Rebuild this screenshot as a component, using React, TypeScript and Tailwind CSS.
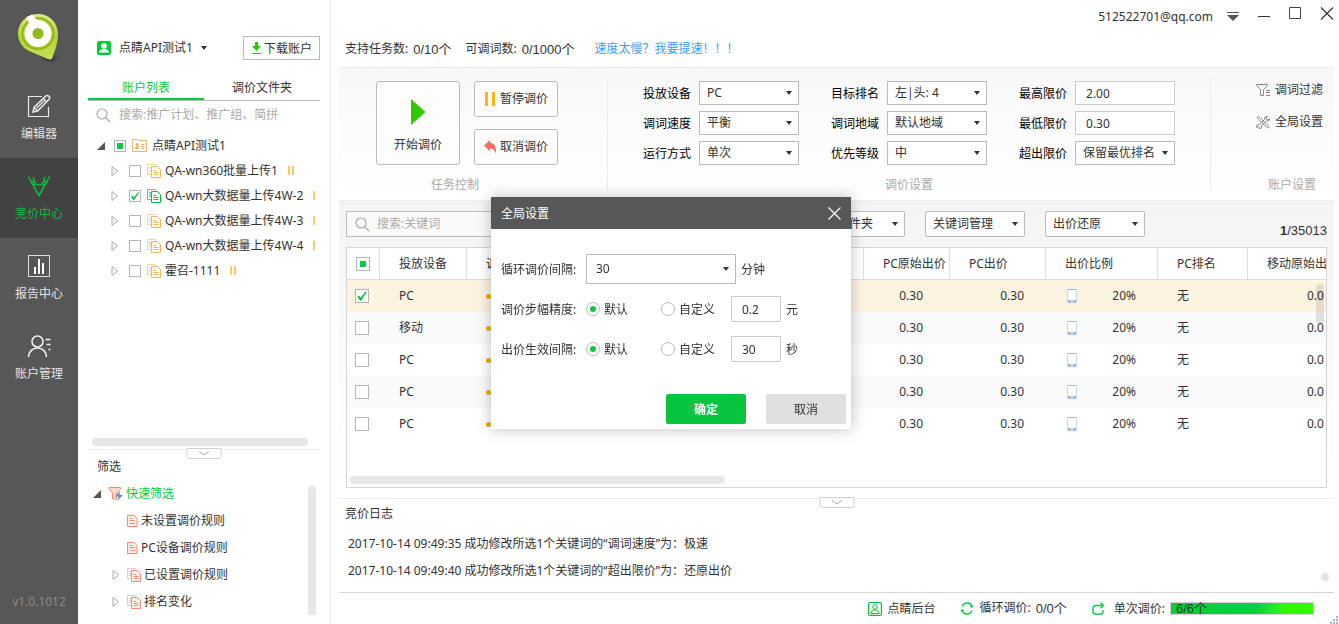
import { useState } from 'react';
import type { ReactNode } from 'react';
import clsx from 'clsx';

/* ---------- icons ---------- */

function Logo() {
  return (
    <svg width="44" height="52" viewBox="0 0 44 52">
      <defs>
        <linearGradient id="pin" x1="0" y1="0" x2="0" y2="1">
          <stop offset="0" stopColor="#dbea8c" />
          <stop offset="0.5" stopColor="#b3d334" />
          <stop offset="1" stopColor="#c9e05c" />
        </linearGradient>
        <radialGradient id="shade">
          <stop offset="0" stopColor="#2e2e2e" />
          <stop offset="1" stopColor="#2e2e2e" stopOpacity="0" />
        </radialGradient>
      </defs>
      <ellipse cx="33" cy="46" rx="9" ry="5" fill="url(#shade)" />
      <path d="M21 2C32 2 41 10.500 41 22c0 10-4 19-5.500 23.500-.6 2-2.500 2.500-4.500 1.500L11 38.500C5 35 1 29 1 22 1 10.500 10 2 21 2Z" fill="url(#pin)" />
      <circle cx="21" cy="21.500" r="16.500" fill="#8eb51a" />
      <circle cx="21" cy="21.500" r="15" fill="#a9cc2b" />
      <circle cx="21" cy="21.500" r="13.500" fill="#fff" />
      <path d="M9 5.500 15 2.500 21 9 13 13Z" fill="#fff" />
      <circle cx="21" cy="21.500" r="5.500" fill="#94b81f" />
    </svg>
  );
}

function EditIcon() {
  return (
    <svg width="24" height="24" viewBox="0 0 24 24" fill="none" stroke="#e8e8e8" strokeWidth="1.2">
      <path d="M15 2.500H1.500v20h20V13" />
      <path d="M6 18l1-4.500L18.500 2.200c1-1 2.500-.9 3.400 0 .9.900 1 2.300 0 3.300L10.500 17Z" strokeWidth="1.600" />
      <path d="M7 13.500l3.500 3.500M16.500 4.500l3.200 3.200M18 6 9.500 14.300" />
    </svg>
  );
}

function BidIcon() {
  return (
    <svg width="24" height="24" viewBox="0 0 24 24" fill="none" stroke="#10b83e" strokeWidth="1.600">
      <path d="M1.500 2.500 4 7.500h3.500L6 3M22.500 2.500 20 7.500h-3.500L18 3" strokeWidth="1.400" />
      <path d="M3.800 7 12 21.500 20.200 7M7.500 7.500 9 10.500h6l1.500-3M6 10.500h12" />
    </svg>
  );
}

function ReportIcon() {
  return (
    <svg width="24" height="24" viewBox="0 0 24 24" fill="none">
      <rect x="1.500" y="1.500" width="21" height="21" stroke="#ddd" />
      <path d="M8 20v-7M12 20V5M16 20V9" stroke="#fff" strokeWidth="2" />
    </svg>
  );
}

function AccountIcon() {
  return (
    <svg width="24" height="24" viewBox="0 0 24 24" fill="none" stroke="#f0f0f0" strokeWidth="1.600">
      <circle cx="10.500" cy="7.500" r="5.500" />
      <path d="M1.500 23c.3-5.500 4-9 9-9s8.700 3.500 9 9M18.500 5.500h5M19.500 10.500h4M21.500 15.500h2" />
    </svg>
  );
}

function SearchIcon() {
  return (
    <svg width="15" height="15" viewBox="0 0 15 15" fill="none" stroke="#aaa" strokeWidth="1.200" className="shrink-0">
      <circle cx="6" cy="6" r="5" />
      <path d="M9.600 9.600 14 14" />
    </svg>
  );
}

function Caret({ className }: { className?: string }) {
  return (
    <svg width="6" height="4" viewBox="0 0 6 4" fill="#333" className={className}>
      <path d="M0 0h6L3 4Z" />
    </svg>
  );
}

function Twisty({ open }: { open?: boolean }) {
  return (
    <svg width="8" height="10" viewBox="0 0 8 10" className="shrink-0">
      {open ? <path d="M8 1v8H0Z" fill="#555" /> : <path d="M1 .5v9L6.500 5Z" fill="#fff" stroke="#aaa" />}
    </svg>
  );
}

function PlanIcon({ color, back, fill }: { color: string; back: string; fill: string }) {
  return (
    <svg width="14" height="14" viewBox="0 0 14 14" fill="none" className="shrink-0">
      <path d="M8.500 2V.5h-8v10H4M2 3.500h2M2 5.500h2M2 7.500h2" stroke={back} />
      <path d="M4.500 2.500h6l3 3v8h-9Z" fill={fill} stroke={color} />
      <path d="M6.500 6.500H9M6.500 8.500h5M6.500 10.500h5" stroke={color} />
    </svg>
  );
}

function RuleIcon() {
  return (
    <svg width="11" height="12" viewBox="0 0 11 12" fill="none" stroke="#ee8f77" className="shrink-0">
      <path d="M.5.5h7l2.500 3v8H.5Z" fill="#fdeee9" />
      <path d="M2.500 3.500h3M2.500 5.500h5M2.500 8.500h5.500" />
    </svg>
  );
}

function FolderIcon() {
  return (
    <svg width="15" height="13" viewBox="0 0 15 13" fill="none" stroke="#f0b763" className="shrink-0">
      <path d="M.5 12.500V.5h5l1 1h8v11Z" />
      <path d="M9 5.500h3.500M9 7.500h3.500M9 9.500h3.500" />
      <path d="M3 10v-1.500l1.500-1L4.500 4h1.500v3.500l1.500 1V10Z" fill="#f0b763" stroke="none" />
      <circle cx="5.200" cy="5.500" r="1.500" fill="#f0b763" stroke="none" />
    </svg>
  );
}

function QuickFilterIcon() {
  return (
    <svg width="15" height="14" viewBox="0 0 15 14" fill="none" className="shrink-0">
      <path d="M1 .5h11.500v1.500L8.500 6v6h-4V6L1 2Z" fill="#fbd9cf" stroke="#ee8f77" />
      <path d="M12 4 7 9.500h3.500L9 14l6-6h-3.500Z" fill="#5b8ee0" />
    </svg>
  );
}

function PhoneIcon() {
  return (
    <svg width="10" height="14" viewBox="0 0 10 14">
      <rect x="0.500" y="0.500" width="9" height="13" rx="1" fill="#fff" stroke="#c6d5e6" />
      <path d="M.5.5h9M.5 12.500h9" stroke="#a5bcd6" />
      <path d="M1 12.500h8" stroke="#a5bcd6" strokeWidth="3" />
      <path d="M4 12.500h2" stroke="#fff" />
    </svg>
  );
}

function Person({ solid }: { solid?: boolean }) {
  return (
    <svg width="14" height="14" viewBox="0 0 14 14" fill="none" className="shrink-0">
      {solid ? (
        <>
          <rect width="14" height="14" rx="2" fill="#08ca3e" />
          <circle cx="7" cy="5" r="2.800" fill="#fff" />
          <path d="M2 11.500c0-2 2-3 4-3.500h2c2 .5 4 1.500 4 3.500Z" fill="#fff" />
        </>
      ) : (
        <g stroke="#08c040">
          <rect x=".6" y=".6" width="12.800" height="12.800" rx="1.500" strokeWidth="1.200" />
          <circle cx="7" cy="5" r="2.300" />
          <path d="M2.800 11.500c0-2 1.800-3.500 4.200-3.500s4.200 1.500 4.200 3.500Z" />
        </g>
      )}
    </svg>
  );
}

/* ---------- form parts ---------- */

const digits = "font-['Liberation_Sans','Noto_Sans_CJK_SC',sans-serif] text-[13px]";

function Select({ id, label, options, className }: { id: string; label?: string; options: string[]; className?: string }) {
  return (
    <span className="relative inline-flex">
      <select
        id={id}
        aria-label={label}
        className={clsx('appearance-none border border-[#bbb] bg-white pr-4 text-[#333] outline-none', className)}
      >
        {options.map(o => <option key={o}>{o}</option>)}
      </select>
      <Caret className="pointer-events-none absolute top-1/2 right-[7px] -mt-[2px]" />
    </span>
  );
}

function Checkbox({ label, checked, mixed, small }: { label: string; checked?: boolean; mixed?: boolean; small?: boolean }) {
  const [on, setOn] = useState(!!checked);
  return (
    <span className={clsx('relative inline-flex shrink-0', small ? 'size-3' : 'size-[14px]')}>
      <input
        type="checkbox"
        aria-label={label}
        checked={on}
        onChange={() => setOn(!on)}
        className={clsx(
          'grid size-full appearance-none place-content-center border border-[#b5b5b5] bg-white',
          mixed && 'before:size-[6px] before:bg-[#08ca3e]',
        )}
      />
      {on && (
        <svg viewBox="0 0 12 12" className="pointer-events-none absolute inset-0 size-full">
          <path d="M2 6.500 3.500 5.800 4.800 7.500 9.200 2l.8.500L5.200 10H4.300Z" fill="#08c03c" />
        </svg>
      )}
    </span>
  );
}

function Radio({ name, text, checked }: { name: string; text: string; checked?: boolean }) {
  return (
    <label className="flex w-[75px] items-center gap-1">
      <input
        type="radio"
        name={name}
        defaultChecked={checked}
        className="grid size-[14px] appearance-none place-content-center rounded-full border border-[#bbb] bg-white checked:before:size-[6px] checked:before:rounded-full checked:before:bg-[#08ca3e]"
      />
      <span className="pt-0.5">{text}</span>
    </label>
  );
}

function CollapseTab({ label }: { label: string }) {
  return (
    <button aria-label={label} className="absolute -top-0.5 left-1/2 flex h-[11px] w-[35px] -translate-x-1/2 items-center justify-center rounded-b-xs border border-[#d0d0d0] bg-white">
      <svg width="11" height="5" viewBox="0 0 11 5" fill="none" stroke="#aaa">
        <path d="M.5.5l5 3.500 5-3.500" />
      </svg>
    </button>
  );
}

/* ---------- navigation ---------- */

const navItems = [
  { text: '编辑器', icon: <EditIcon /> },
  { text: '竞价中心', icon: <BidIcon />, active: true },
  { text: '报告中心', icon: <ReportIcon /> },
  { text: '账户管理', icon: <AccountIcon /> },
];

function SideNav() {
  return (
    <nav className="flex w-[78px] shrink-0 flex-col items-center bg-[#575757]">
      <div className="flex h-[78px] items-start pt-3">
        <Logo />
      </div>
      {navItems.map(item => (
        <a
          key={item.text}
          href="#"
          className={clsx(
            'flex h-20 w-full flex-col items-center gap-1.5 pt-4',
            item.active ? 'bg-[#424242] text-[#10b83e]' : 'text-[#e4e4e4]',
          )}
        >
          {item.icon}
          <span className="leading-5">{item.text}</span>
        </a>
      ))}
      <span className="mt-auto pb-3.5 text-[#8a8a8a]">v1.0.1012</span>
    </nav>
  );
}

/* ---------- account panel ---------- */

const plans = [
  { name: 'QA-wn360批量上传1' },
  { name: 'QA-wn大数据量上传4W-2', checked: true },
  { name: 'QA-wn大数据量上传4W-3' },
  { name: 'QA-wn大数据量上传4W-4' },
  { name: '霍召-1111' },
];

const rules = [
  { name: '未设置调价规则' },
  { name: 'PC设备调价规则' },
  { name: '已设置调价规则', group: true },
  { name: '排名变化', group: true },
];

function AccountPanel() {
  return (
    <aside className="flex w-[253px] shrink-0 flex-col border-r border-[#ececec] px-2.5">
      <div className="mt-9 flex items-center justify-between pl-[9px]">
        <button className="flex items-center gap-2">
          <Person solid />
          点睛API测试1
          <Caret />
        </button>
        <button className="flex h-6 w-[77px] items-center justify-center gap-0.5 border border-[#bbb]">
          <svg width="11" height="12" viewBox="0 0 11 12" fill="#2fc800">
            <path d="M4 0h3v4h3L5.500 9 1 4h3ZM1 11h9v1H1Z" />
          </svg>
          <span className="pt-0.5">下载账户</span>
        </button>
      </div>
      <div className="mt-[17px] flex h-6 border-b border-[#bbb]">
        <button className="flex-1 border-b-2 border-[#08ca3e] leading-5 text-[#08ca3e]">账户列表</button>
        <button className="flex-1 pb-0.5 leading-5">调价文件夹</button>
      </div>
      <label className="mb-1 flex h-7 items-center gap-2 px-2">
        <SearchIcon />
        <input
          aria-label="搜索账户"
          placeholder="搜索:推广计划、推广组、简拼"
          className="min-w-0 flex-1 outline-none placeholder:text-[#aaa]"
        />
      </label>
      <ul className="mr-1 flex-1 overflow-hidden whitespace-nowrap">
        <li className="flex h-[25px] items-center pl-[9px]">
          <Twisty open />
          <span className="mr-1.5 ml-[9px] flex"><Checkbox small mixed label="点睛API测试1" /></span>
          <FolderIcon />
          <span className="ml-[5px]">点睛API测试1</span>
        </li>
        {plans.map(p => (
          <li key={p.name} className="flex h-[25px] items-center pl-[23px]">
            <Twisty />
            <span className="mr-1.5 ml-[10px] flex"><Checkbox small checked={p.checked} label={p.name} /></span>
            {p.checked
              ? <PlanIcon color="#08c040" back="#4fd67a" fill="#fff" />
              : <PlanIcon color="#f0b763" back="#f7d19a" fill="#fff8ec" />}
            <span className="ml-1">{p.name}</span>
            <svg width="7" height="9" viewBox="0 0 7 9" fill="#ffc766" className="ml-[10px] shrink-0">
              <path d="M0 0h2v9H0ZM4 0h2v9H4Z" />
            </svg>
          </li>
        ))}
      </ul>
      <div className="mb-[3px] ml-1 h-2 w-[216px] rounded-full bg-[#e7e7e7]" />
      <div className="relative border-t border-[#ececec] pt-2">
        <CollapseTab label="收起筛选" />
        <h2 className="pl-[9px] leading-[18px]">筛选</h2>
        <div className="mb-[9px] flex justify-between pt-1 pr-1">
          <ul>
            <li className="flex h-[27px] items-center pl-[5px] text-[#08ca3e]">
              <Twisty open />
              <span className="mr-[3px] ml-[7px]"><QuickFilterIcon /></span>
              快速筛选
            </li>
            {rules.map(r => (
              <li key={r.name} className={clsx('flex h-[27px] items-center', r.group ? 'pl-6' : 'pl-[39px]')}>
                {r.group && <span className="mr-[7px]"><Twisty /></span>}
                {r.group ? <PlanIcon color="#ee8f77" back="#f8c5b7" fill="#fdeee9" /> : <RuleIcon />}
                <span className="ml-[3px]">{r.name}</span>
              </li>
            ))}
          </ul>
          <div className="mt-[6px] w-2 rounded-t-full bg-[#e7e7e7]" />
        </div>
      </div>
    </aside>
  );
}

/* ---------- main area ---------- */

function TitleBar() {
  return (
    <header className="flex h-[34px] items-center justify-end">
      <span>512522701@qq.com</span>
      <button aria-label="菜单" className="ml-3.5">
        <svg width="12" height="10" viewBox="0 0 12 10" fill="#555"><path d="M0 0h12v1H0ZM0 3h12L6 9Z" /></svg>
      </button>
      <div className="-mt-2 ml-[19px] flex items-center gap-[19px]">
        <button aria-label="最小化">
          <svg width="12" height="14" viewBox="0 0 12 14" stroke="#333"><path d="M0 10.500h12" /></svg>
        </button>
        <button aria-label="最大化">
          <svg width="12" height="12" viewBox="0 0 12 12" fill="none" stroke="#444"><path d="M.5.5h11v11H.5Z" /></svg>
        </button>
        <button aria-label="关闭">
          <svg width="14" height="13" viewBox="0 0 14 13" stroke="#333" strokeWidth="1.200"><path d="M1 .5l12 12M13 .5l-12 12" /></svg>
        </button>
      </div>
    </header>
  );
}

const settings = [
  { id: 'device', label: '投放设备', options: ['PC', '移动'] },
  { id: 'rank', label: '目标排名', options: ['左|头: 4'] },
  { id: 'max', label: '最高限价', value: '2.00' },
  { id: 'speed', label: '调词速度', options: ['平衡', '极速'] },
  { id: 'area', label: '调词地域', options: ['默认地域'] },
  { id: 'min', label: '最低限价', value: '0.30' },
  { id: 'mode', label: '运行方式', options: ['单次', '循环'] },
  { id: 'priority', label: '优先等级', options: ['中', '高', '低'] },
  { id: 'over', label: '超出限价', options: ['保留最优排名', '还原出价'] },
];

function Caption({ children, className }: { children: ReactNode; className?: string }) {
  return <span className={clsx('mt-auto -mb-1 leading-5 text-[#aaa]', className)}>{children}</span>;
}

function Toolbar() {
  const btn = 'flex items-center justify-center rounded-[3px] border border-[#bbb] bg-[#fdfdfd]';
  return (
    <section className="flex h-[133px] border-t border-[#ececec] bg-linear-to-b from-[#f8f8f8] to-white pt-2 pb-[9px]">
      <div className="flex w-[268px] shrink-0 flex-col pt-[5px] pl-[37px]">
        <div className="flex gap-3.5">
          <button className={clsx(btn, 'h-[84px] w-[84px] flex-col gap-3 pt-1.5')}>
            <svg width="15" height="26" viewBox="0 0 15 26" fill="#2fc800"><path d="M0 0v26l14.500-13Z" /></svg>
            开始调价
          </button>
          <div className="flex flex-col gap-3">
            <button className={clsx(btn, 'h-9 w-[84px] gap-1')}>
              <svg width="12" height="14" viewBox="0 0 12 14" fill="#ffb31a"><path d="M1 0h3v14H1ZM8 0h3v14H8Z" /></svg>
              暂停调价
            </button>
            <button className={clsx(btn, 'h-9 w-[84px] gap-1')}>
              <svg width="12" height="14" viewBox="0 0 12 14" fill="#f8705c"><path d="M0 5.500 6 0v3c4.500 0 6.500 4 6 10.500C10.500 10 9 8.500 6 8.500v3Z" /></svg>
              取消调价
            </button>
          </div>
        </div>
        <Caption className="pl-[55px]">任务控制</Caption>
      </div>
      <div className="flex flex-1 flex-col items-center border-x border-[#ececec] pt-[5px]">
        <div className="grid grid-cols-3 gap-x-8 gap-y-1.5">
          {settings.map(s => (
            <div key={s.id} className="flex items-center gap-2">
              <label htmlFor={s.id} className="pt-0.5 text-black">{s.label}</label>
              {s.options ? (
                <Select id={s.id} options={s.options} className="h-6 w-[100px] pl-[7px]" />
              ) : (
                <input id={s.id} defaultValue={s.value} className="h-6 w-[100px] border border-[#ccc] bg-white px-2.5 outline-none" />
              )}
            </div>
          ))}
        </div>
        <Caption>调价设置</Caption>
      </div>
      <div className="flex w-[123px] shrink-0 flex-col pt-1 pl-[45px]">
        <button className="flex items-center gap-[5px] leading-5">
          <svg width="14" height="12" viewBox="0 0 14 12" fill="none" stroke="#888">
            <path d="M.5.5h11v1L7.500 5.500v6h-3v-6L.5 1.500ZM10 6.500h4M10 8.500h4M10 11.500h4" />
          </svg>
          调词过滤
        </button>
        <button className="mt-3 flex items-center gap-[5px] leading-5">
          <svg width="14" height="13" viewBox="0 0 14 13" fill="none" stroke="#888">
            <path d="M1 1.500 2.500.5 8 5.500l4.500 4.500c1 1-.5 2.500-1.500 1.500L6.500 7 1.500 2.500Z" />
            <path d="M13.500 2.500 12 4l-1.500-.5L10 2l1.500-1.500C9.500 0 8 1.500 8.500 3.500L3.500 8.500C1.500 8 0 9.500.5 11.500L2 10.500l1.500 1L3 13c2 0 3-1.500 2.500-3.500L10.500 5c2 .5 3.500-1 3-2.500Z" />
          </svg>
          全局设置
        </button>
        <Caption className="pl-3">账户设置</Caption>
      </div>
    </section>
  );
}

const keywords = [
  { device: 'PC', checked: true },
  { device: '移动' },
  { device: 'PC' },
  { device: 'PC' },
  { device: 'PC' },
];

function KeywordTable() {
  const th = 'border-r border-[#ddd] pl-[19px] text-left font-normal';
  return (
    <div className="relative flex-1 overflow-hidden border border-[#d6d6d6] bg-white">
      <table className="w-full min-w-[1010px] table-fixed border-separate border-spacing-0 whitespace-nowrap">
        <colgroup>
          <col className="w-[33px]" />
          <col className="w-[87px]" />
          <col className="w-[397px]" />
          <col className="w-[86px]" />
          <col className="w-[96px]" />
          <col className="w-[112px]" />
          <col className="w-[90px]" />
          <col />
        </colgroup>
        <thead>
          <tr className="h-8 [&>th]:border-b">
            <th className="border-r border-[#ddd] pl-[9px] text-left">
              <span className="flex"><Checkbox mixed label="全选" /></span>
            </th>
            <th className={th}>投放设备</th>
            <th className={th}>调价状态</th>
            <th className={th}>PC原始出价</th>
            <th className={th}>PC出价</th>
            <th className={th}>出价比例</th>
            <th className={th}>PC排名</th>
            <th className={th}>移动原始出价</th>
          </tr>
        </thead>
        <tbody>
          {keywords.map((k, i) => (
            <tr key={i} className={clsx('h-8', k.checked ? 'bg-[#fdf3e1]' : i % 2 ? 'bg-[#fafafa]' : 'bg-white')}>
              <td className="pl-2">
                <span className="flex"><Checkbox checked={k.checked} label={`选择第${i + 1}行`} /></span>
              </td>
              <td className="pl-[19px]">{k.device}</td>
              <td className="pl-[19px]"><span className="block size-[5px] rounded-full bg-[#f5a80c]" /></td>
              <td className="pr-[27px] text-right">0.30</td>
              <td className="pr-[22px] text-right">0.30</td>
              <td className="pr-[22px] pl-[21px]">
                <span className="flex items-center justify-between"><PhoneIcon />20%</span>
              </td>
              <td className="pl-[19px]">无</td>
              <td className="pl-[59px]">0.0</td>
            </tr>
          ))}
        </tbody>
      </table>
      <div className="absolute top-9 right-0.5 h-10 w-2 rounded-full bg-black/10" />
      <div className="absolute bottom-[3px] left-[3px] h-2 w-[375px] rounded-full bg-[#e7e7e7]" />
    </div>
  );
}

function KeywordSection() {
  const sel = 'h-[26px] w-[100px] rounded-xs pl-[7px] bg-[#fdfdfd]';
  return (
    <section className="flex flex-1 flex-col border-t border-[#ececec] bg-linear-to-b from-[#f4f4f4] to-white px-[7px] py-2.5">
      <div className="mb-2.5 flex gap-5">
        <label className="flex h-[26px] w-[439px] items-center gap-[7px] border border-[#bbb] bg-[#fafafa] px-2">
          <SearchIcon />
          <input aria-label="搜索关键词" placeholder="搜索:关键词" className="min-w-0 flex-1 outline-none placeholder:text-[#aaa]" />
        </label>
        <Select id="folder" label="调价文件夹" options={['调价文件夹']} className={sel} />
        <Select id="manage" label="关键词管理" options={['关键词管理']} className={sel} />
        <Select id="restore" label="出价还原" options={['出价还原']} className={sel} />
        <span className={clsx(digits, 'ml-auto self-end pb-px leading-[10px]')}><b>1</b>/35013</span>
      </div>
      <KeywordTable />
    </section>
  );
}

function BidLog() {
  return (
    <section className="relative h-[94px] shrink-0 border-t border-[#ececec] pt-[5px] pl-1.5">
      <CollapseTab label="收起日志" />
      <h2 className="leading-5">竞价日志</h2>
      <ul className="mt-1.5 pl-[3px] leading-[27px]">
        <li>2017-10-14 09:49:35 成功修改所选1个关键词的“调词速度”为：极速</li>
        <li>2017-10-14 09:49:40 成功修改所选1个关键词的“超出限价”为：还原出价</li>
      </ul>
      <div className="absolute right-[5px] bottom-[11px] size-2 rounded-full bg-[#e4e4e4]" />
    </section>
  );
}

function StatusBar() {
  return (
    <footer className="relative flex h-8 shrink-0 items-center justify-end border-t border-[#d5d5d5] pr-5">
      <a href="#" className="flex items-center gap-[5px]">
        <Person />
        点睛后台
      </a>
      <span className="ml-[25px] flex items-center gap-[5px]">
        <svg width="14" height="13" viewBox="0 0 14 13" fill="none" stroke="#12c94a" strokeWidth="1.400">
          <path d="M2 4.500C3 2 5 1 7 1c2.200 0 4 1 4.800 3M12 8.500C11 11 9 12 7 12c-2.200 0-4-1-4.800-3" />
          <path d="M14 3.500l-2 2.500-2.500-2M0 9.500 2 7l2.500 2" fill="#12c94a" stroke="none" />
        </svg>
        循环调价: <span className={digits}>0/0个</span>
      </span>
      <span className="ml-[25px] flex items-center">
        <svg width="13" height="13" viewBox="0 0 13 13" fill="none" stroke="#12c94a" strokeWidth="1.400">
          <path d="M10 3.500H4C2 3.500 1 4.500 1 6.500v3C1 11.500 2 12.200 4 12.200h4c2 0 3-.7 3-2.700V8M8.500.8l3 2.700-3 2.700" />
        </svg>
        <span className="ml-[9px]">单次调价:</span>
        <span className={clsx(digits, 'ml-[5px] flex h-[13px] w-36 items-center border border-[#dcd0dc] bg-linear-to-r from-[#04cf3e] from-60% to-[#2dfc00] to-80% pl-[5px]')}>
          6/6个
        </span>
      </span>
      <svg width="8" height="8" viewBox="0 0 8 8" fill="#aab2c8" className="absolute -right-1 bottom-0">
        <path d="M6 0h2v2H6ZM3 3h2v2H3ZM6 3h2v2H6ZM0 6h2v2H0ZM3 6h2v2H3ZM6 6h2v2H6Z" />
      </svg>
    </footer>
  );
}

/* ---------- dialog ---------- */

function SettingsDialog({ onClose }: { onClose: () => void }) {
  const rows = [
    { id: 'step', label: '调价步幅精度:', value: '0.2', unit: '元' },
    { id: 'effect', label: '出价生效间隔:', value: '30', unit: '秒' },
  ];
  return (
    <div className="fixed inset-0 flex items-center justify-center pt-0.5 pl-[3px]">
      <div role="dialog" aria-label="全局设置" className="w-[360px] bg-white shadow-[0_0_14px_rgba(0,0,0,0.25)]">
        <div className="flex h-8 items-center justify-between bg-[#575757] px-2.5 text-white">
          <h2 className="pt-0.5">全局设置</h2>
          <button aria-label="关闭" onClick={onClose}>
            <svg width="13" height="13" viewBox="0 0 13 13" stroke="#fff" strokeWidth="1.200"><path d="M.5.5l12 12M12.500.5l-12 12" /></svg>
          </button>
        </div>
        <div className="flex flex-col gap-2.5 px-2.5 pt-[25px]">
          <div className="flex items-center">
            <label htmlFor="interval" className="w-[85px] pt-0.5">循环调价间隔:</label>
            <Select id="interval" options={['30', '60']} className="h-[30px] w-[150px] pl-[9px]" />
            <span className="ml-[5px] pt-0.5">分钟</span>
          </div>
          {rows.map(r => (
            <div key={r.id} role="radiogroup" aria-label={r.label} className="flex h-[30px] items-center">
              <span className="w-[85px] pt-0.5">{r.label}</span>
              <Radio name={r.id} text="默认" checked />
              <Radio name={r.id} text="自定义" />
              <input aria-label={r.label} defaultValue={r.value} className="-ml-[5px] h-[26px] w-[50px] border border-[#ccc] px-2.5 outline-none" />
              <span className="ml-[5px] pt-0.5">{r.unit}</span>
            </div>
          ))}
        </div>
        <div className="mt-[30px] flex justify-end gap-5 pr-[5px] pb-[5px]">
          <button onClick={onClose} className="h-[30px] w-20 rounded-xs bg-[#08c540] pt-0.5 font-bold text-white">确定</button>
          <button onClick={onClose} className="h-[30px] w-20 rounded-xs bg-[#dfdfdf] pt-0.5">取消</button>
        </div>
      </div>
    </div>
  );
}

export default function App() {
  const [open, setOpen] = useState(true);

  return (
    <div className="flex min-h-screen bg-white font-['Noto_Sans','Noto_Sans_CJK_SC',sans-serif] text-xs text-[#333]">
      <SideNav />
      <AccountPanel />
      <main className="flex min-w-0 flex-1 flex-col pr-[5px] pl-2">
        <TitleBar />
        <div className="flex h-[33px] items-center pb-0.5 pl-1.5">
          <span className="flex items-center gap-[5px]">支持任务数: <span className={digits}>0/10个</span></span>
          <span className="ml-3.5 flex items-center gap-[5px]">可调词数: <span className={digits}>0/1000个</span></span>
          <a href="#" className="ml-5 pb-0.5 text-[#3d9df5]">速度太慢？我要提速！！！</a>
        </div>
        <Toolbar />
        <KeywordSection />
        <BidLog />
        <StatusBar />
      </main>
      {open && <SettingsDialog onClose={() => setOpen(false)} />}
    </div>
  );
}
